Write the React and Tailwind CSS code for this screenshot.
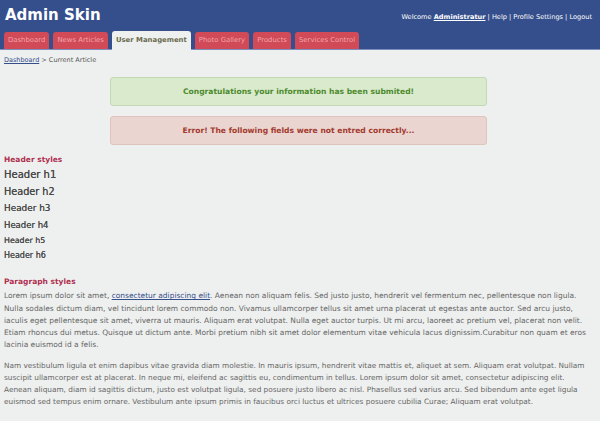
export default function App() {
  const tabs = ["Dashboard", "News Articles", "User Management", "Photo Gallery", "Products", "Services Control"];
  return (
    <div className="w-[600px] h-[421px] overflow-hidden bg-[#eef0ef] font-['DejaVu_Sans',Verdana,sans-serif] text-[#555]">
      <div className="bg-[#354f8c] border-b border-[#7d8fbd]">
        <div className="flex items-start justify-between px-[5px] pt-[6px] h-[30px]">
          <div className="text-white text-[15px] leading-[18px] font-semibold">Admin Skin</div>
          <div className="text-white text-[6.6px] pt-[7px] pr-[3px]">
            Welcome <a className="font-bold underline">Administratur</a> | Help | Profile Settings | Logout
          </div>
        </div>
        <div className="flex items-end gap-[4px] px-[4px] h-[19px]">
          {tabs.map((t, i) =>
            i === 2 ? (
              <div key={t} className="h-[19px] -mb-px px-[4px] flex items-center bg-[#eef0ef] rounded-t-[3px] text-[6.9px] font-bold text-[#6b6a50]">{t}</div>
            ) : (
              <div key={t} className="h-[17px] px-[4px] flex items-center bg-[#d04a58] rounded-t-[3px] text-[6.9px] text-[#f2a4ab]">{t}</div>
            )
          )}
        </div>
      </div>
      <div className="px-[4px] pt-[6px]">
        <div className="text-[6.5px] text-[#555]"><a className="underline text-[#354f8c]">Dashboard</a> &gt; Current Article</div>
        <div className="flex flex-col gap-[10px] mt-[11px] ml-[106px] w-[377px]">
          <div className="h-[29px] flex items-center justify-center bg-[#d9eacd] border border-[#c3d9b4] rounded-[3px] text-[#4f8b2e] text-[7.6px] font-bold">Congratulations your information has been submited!</div>
          <div className="h-[29px] flex items-center justify-center bg-[#ebd5d0] border border-[#dfc3bd] rounded-[3px] text-[#a33a2e] text-[7.6px] font-bold">Error! The following fields were not entred correctly...</div>
        </div>
        <div className="mt-[9px] text-[#b0304f] text-[7.5px] font-bold">Header styles</div>
        <div className="text-[#4a4a4a] [text-shadow:0_0_0.4px_#4a4a4a]">
          <div className="text-[10px] leading-[17px] mt-[1px]">Header h1</div>
          <div className="text-[9.7px] leading-[17px]">Header h2</div>
          <div className="text-[8.9px] leading-[17px]">Header h3</div>
          <div className="text-[8.5px] leading-[16px]">Header h4</div>
          <div className="text-[7.9px] leading-[15px]">Header h5</div>
          <div className="text-[8px] leading-[15px]">Header h6</div>
        </div>
        <div className="mt-[13px] text-[#b0304f] text-[7.5px] font-bold">Paragraph styles</div>
        <p className="text-[7.48px] leading-[12.3px] mt-[3px] pr-[2px] text-[#666]">
          Lorem ipsum dolor sit amet, <a className="underline text-[#354f8c]">consectetur adipiscing elit</a>. Aenean non aliquam felis. Sed justo justo, hendrerit vel fermentum nec, pellentesque non ligula. Nulla sodales dictum diam, vel tincidunt lorem commodo non. Vivamus ullamcorper tellus sit amet urna placerat ut egestas ante auctor. Sed arcu justo, iaculis eget pellentesque sit amet, viverra ut mauris. Aliquam erat volutpat. Nulla eget auctor turpis. Ut mi arcu, laoreet ac pretium vel, placerat non velit. Etiam rhoncus dui metus. Quisque ut dictum ante. Morbi pretium nibh sit amet dolor elementum vitae vehicula lacus dignissim.Curabitur non quam et eros lacinia euismod id a felis.
        </p>
        <p className="text-[7.35px] leading-[12.1px] mt-[8px] text-[#666]">
          Nam vestibulum ligula et enim dapibus vitae gravida diam molestie. In mauris ipsum, hendrerit vitae mattis et, aliquet at sem. Aliquam erat volutpat. Nullam<br />suscipit ullamcorper est at placerat. In neque mi, eleifend ac sagittis eu, condimentum in tellus. Lorem ipsum dolor sit amet, consectetur adipiscing elit.<br />Aenean aliquam, diam id sagittis dictum, justo est volutpat ligula, sed posuere justo libero ac nisl. Phasellus sed varius arcu. Sed bibendum ante eget ligula<br />euismod sed tempus enim ornare. Vestibulum ante ipsum primis in faucibus orci luctus et ultrices posuere cubilia Curae; Aliquam erat volutpat.
        </p>
      </div>
    </div>
  );
}
